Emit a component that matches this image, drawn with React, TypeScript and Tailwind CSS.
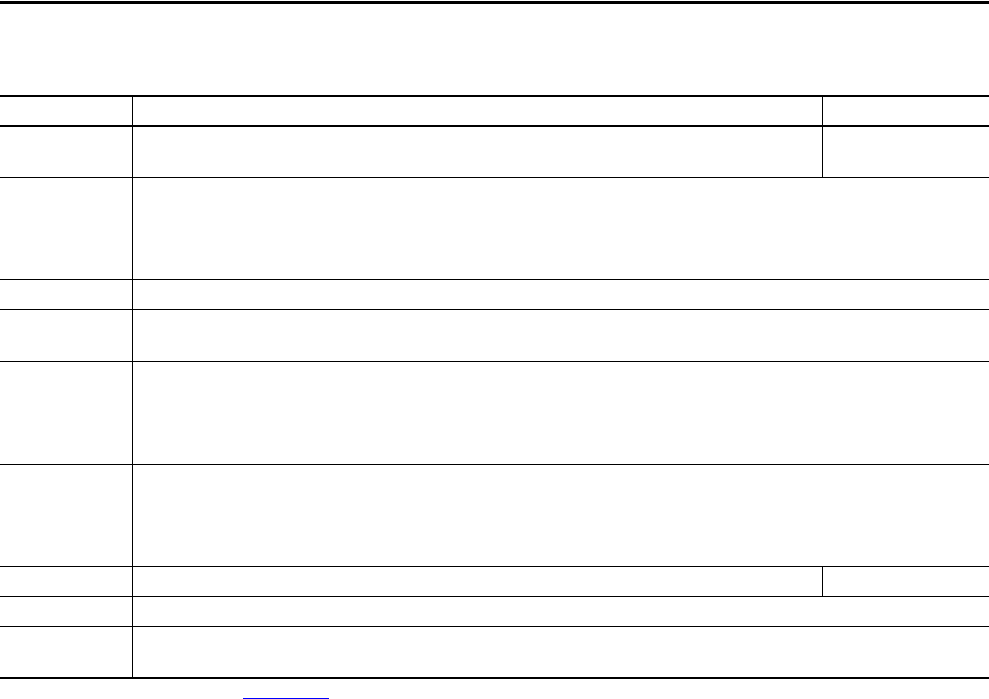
import React from "react";

type Row = { h: string; split: boolean; cls?: string };

const rows: Row[] = [
  { h: "h-[51px]", split: true },
  { h: "h-[102px]", split: false },
  { h: "h-[30px]", split: false },
  { h: "h-[52px]", split: false },
  { h: "h-[103px]", split: false },
  { h: "h-[102px]", split: false },
  { h: "h-[30px]", split: true },
  { h: "h-[30px]", split: false },
  { h: "h-[52px]", split: false, cls: "border-b-2" },
];

export default function App() {
  return (
    <div
      className="w-[989px] h-[699px] bg-white overflow-hidden text-black"
      style={{ fontFamily: '"Liberation Sans", Arial, sans-serif' }}
    >
      <div className="mt-[1px] h-[3px] bg-black" />
      <div className="mt-[91px] flex flex-col">
        <div className="flex h-[32px] border-t-2 border-b-2 border-black">
          <div className="w-[133px] border-r border-black" />
          <div className="w-[690px] border-r border-black" />
          <div className="flex-1" />
        </div>
        {rows.map((r, i) => (
          <div
            key={i}
            className={`flex ${r.h} border-black ${r.cls ?? "border-b"}`}
          >
            <div className="w-[133px] border-r border-black" />
            {r.split ? (
              <>
                <div className="w-[690px] border-r border-black" />
                <div className="flex-1" />
              </>
            ) : (
              <div className="flex-1" />
            )}
          </div>
        ))}
      </div>
      <div className="mt-[19px] ml-[243px] w-[86px] h-[1px] bg-[#0000ff]" />
    </div>
  );
}
